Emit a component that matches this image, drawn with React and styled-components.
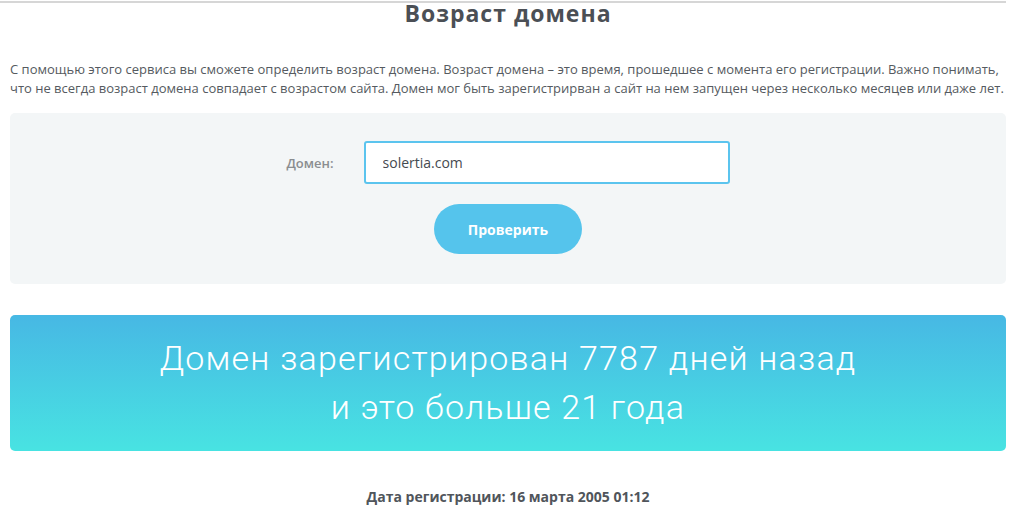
import styled, { createGlobalStyle } from "styled-components";

const GlobalStyle = createGlobalStyle`
  * {
    box-sizing: border-box;
  }
  body {
    margin: 0;
    background: #fff;
    font-family: "Open Sans", "Liberation Sans", sans-serif;
  }
`;

const Page = styled.div`
  width: 1006px;
  margin-top: 1px;
  border-top: 2px solid #d6d6d6;
  padding-left: 10px;
`;

const Title = styled.h1`
  margin: 0;
  font-family: "Open Sans", sans-serif;
  font-weight: 700;
  font-size: 23px;
  line-height: 20px;
  color: #4b4f55;
  text-align: center;
  letter-spacing: 1px;
`;

const Intro = styled.p`
  margin: 37px 0 0;
  font-family: "Open Sans", sans-serif;
  font-size: 13px;
  line-height: 18.5px;
  color: #555a60;
`;

const Panel = styled.div`
  margin-top: 16px;
  background: #f3f6f7;
  border-radius: 5px;
  padding: 28px 0 30px;
  display: flex;
  flex-direction: column;
  align-items: center;
  gap: 20px;
`;

const Row = styled.div`
  display: flex;
  align-items: center;
  gap: 30px;
`;

const Label = styled.label`
  font-family: "Open Sans", sans-serif;
  font-weight: 600;
  font-size: 13px;
  color: #8a8d90;
`;

const Input = styled.input`
  width: 366px;
  height: 43px;
  border: 2px solid #5bc4ee;
  border-radius: 3px;
  padding: 0 17px;
  font-family: "Open Sans", sans-serif;
  font-size: 14px;
  font-weight: 500;
  color: #454a50;
  background: #fff;
  outline: none;
`;

const Button = styled.button`
  width: 148px;
  height: 50px;
  border: none;
  border-radius: 25px;
  background: #55c4ec;
  color: #fff;
  font-family: "Open Sans", sans-serif;
  font-weight: 700;
  font-size: 14px;
  cursor: pointer;
`;

const Result = styled.div`
  margin-top: 31px;
  height: 136px;
  border-radius: 5px;
  background: linear-gradient(to bottom, #47b8e4, #48e3e2);
  display: flex;
  flex-direction: column;
  align-items: center;
  justify-content: center;
  color: #fff;
  font-family: Roboto, sans-serif;
  font-weight: 300;
  font-size: 34px;
  line-height: 49px;
  letter-spacing: 1.2px;
`;

const RegDate = styled.div`
  margin-top: 36px;
  text-align: center;
  font-family: "Open Sans", sans-serif;
  font-weight: 700;
  font-size: 14px;
  color: #50555b;
`;

export default function App() {
  return (
    <>
      <GlobalStyle />
      <Page>
        <Title>Возраст домена</Title>
        <Intro>
          С помощью этого сервиса вы сможете определить возраст домена. Возраст
          домена – это время, прошедшее с момента его регистрации. Важно
          понимать, что не всегда возраст домена совпадает с возрастом сайта.
          Домен мог быть зарегистрирван а сайт на нем запущен через несколько
          месяцев или даже лет.
        </Intro>
        <Panel>
          <Row>
            <Label>Домен:</Label>
            <Input defaultValue="solertia.com" />
          </Row>
          <Button>Проверить</Button>
        </Panel>
        <Result>
          <div>Домен зарегистрирован 7787 дней назад</div>
          <div>и это больше 21 года</div>
        </Result>
        <RegDate>Дата регистрации: 16 марта 2005 01:12</RegDate>
      </Page>
    </>
  );
}
